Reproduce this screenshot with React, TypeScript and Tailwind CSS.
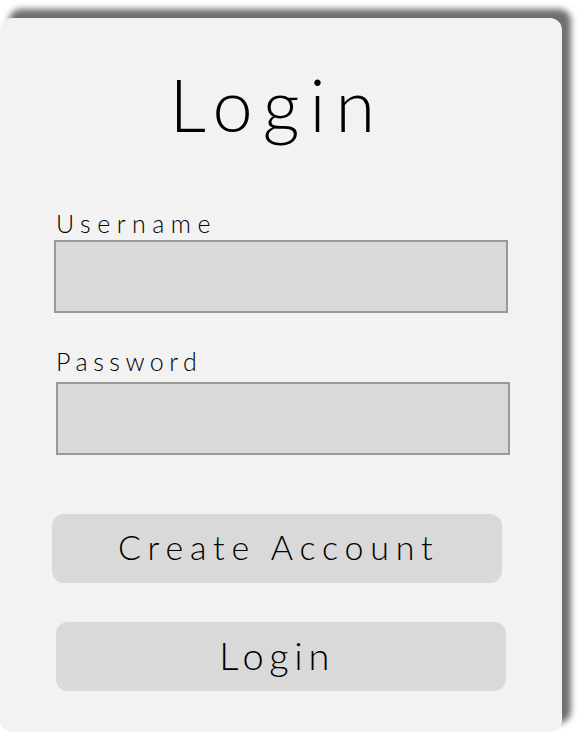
import React from "react";

export default function App() {
  const font = { fontFamily: "Lato, 'Open Sans', sans-serif" };
  return (
    <div className="w-[580px] h-[736px] bg-white overflow-hidden" style={font}>
      <div className="mt-[18px] w-[562px] h-[714px] rounded-[12px] bg-[#f2f2f2] shadow-[9px_-9px_6px_#6f6f6f] pt-[50px] text-black font-light">
        <div className="text-center text-[72px] leading-none tracking-[0.14em] pr-[0.1em] h-[72px]">Login</div>
        <div className="mt-[71px] ml-[56px] text-[25px] leading-none tracking-[0.26em] h-[25px]">Username</div>
        <div className="mt-[4px] ml-[54px] w-[454px] h-[73px] border-2 border-[#999999] bg-[#d9d9d9]" />
        <div className="mt-[36px] ml-[56px] text-[25px] leading-none tracking-[0.22em] h-[25px]">Password</div>
        <div className="mt-[8px] ml-[56px] w-[454px] h-[73px] border-2 border-[#999999] bg-[#d9d9d9]" />
        <div className="mt-[59px] ml-[52px] w-[450px] h-[69px] rounded-[12px] bg-[#d9d9d9] flex items-center justify-center pb-[3px] text-[34px] leading-none tracking-[0.2em] pl-[0.1em]">
          Create Account
        </div>
        <div className="mt-[39px] ml-[56px] w-[450px] h-[69px] rounded-[12px] bg-[#d9d9d9] flex items-center justify-center pb-[3px] text-[38px] leading-none tracking-[0.15em] pr-[0.2em]">
          Login
        </div>
      </div>
    </div>
  );
}
